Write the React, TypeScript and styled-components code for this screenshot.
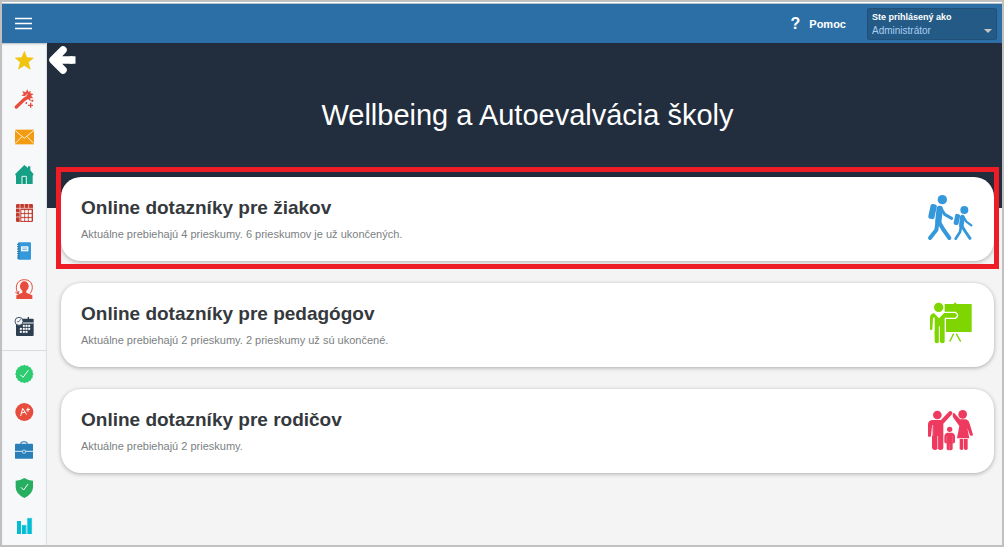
import React from 'react';
import styled, { createGlobalStyle } from 'styled-components';

const GlobalStyle = createGlobalStyle`
  *, *::before, *::after { box-sizing: border-box; }
  body {
    margin: 0;
    background: #f4f4f4;
    font-family: "Liberation Sans", Arial, sans-serif;
  }
`;

const Frame = styled.div`
  display: flex;
  flex-direction: column;
  min-height: 100vh;
  border: 2px solid #c0c0c0;
`;

const TopBar = styled.header`
  display: flex;
  align-items: center;
  justify-content: space-between;
  height: 41px;
  padding: 2px 5px 0 9px;
  background: #2c6fa6;
  border-top: 1px solid #ffffff;
  box-shadow: inset 0 1px 0 #b9c3cb;
`;

const IconButton = styled.button`
  display: flex;
  align-items: center;
  justify-content: center;
  width: 24px;
  height: 30px;
  padding: 0;
  border: 0;
  background: none;
  cursor: pointer;
`;

const TopActions = styled.div`
  display: flex;
  align-items: center;
  gap: 21px;
`;

const HelpLink = styled.a`
  display: flex;
  align-items: center;
  gap: 9px;
  color: #ffffff;
  font-size: 11px;
  font-weight: bold;
  line-height: 16px;
  text-decoration: none;
`;

const HelpMark = styled.span`
  font-size: 16px;
  line-height: 16px;
`;

const RoleBox = styled.div`
  position: relative;
  width: 130px;
  height: 32px;
  padding: 2px 0 0 4px;
  border: 1px solid #215179;
  border-radius: 2px;
  background: #245a86;
`;

const RoleLabel = styled.label`
  display: block;
  color: #ffffff;
  font-size: 9px;
  font-weight: bold;
  line-height: 12px;
  white-space: nowrap;
`;

const RoleSelect = styled.select`
  display: block;
  width: 100%;
  height: 16px;
  padding: 0;
  border: 0;
  appearance: none;
  background: none;
  color: #a9cdf2;
  font-family: inherit;
  font-size: 10px;
  line-height: 16px;
`;

const Caret = styled.span`
  position: absolute;
  right: 4px;
  bottom: 6px;
  border: 4px solid transparent;
  border-top-color: #c5c5c5;
  border-bottom: 0;
  pointer-events: none;
`;

const Body = styled.div`
  display: flex;
  flex: 1;
`;

const Sidebar = styled.nav`
  flex: none;
  width: 45px;
  background: #f6f8fa;
  border-right: 1px solid #dfe2e5;
  box-shadow: inset 0 2px 2px -1px #b4bac0;
`;

const NavGroup = styled.ul`
  display: grid;
  gap: 2px;
  margin: 0;
  padding: 0;
  list-style: none;

  & + & {
    margin-top: 5px;
    padding-top: 5px;
    border-top: 1px solid #d9dcdf;
  }
`;

const NavLink = styled.a`
  display: flex;
  align-items: center;
  justify-content: center;
  height: 36px;
`;

const Main = styled.main`
  flex: 1;
  min-width: 0;
  background: #f4f4f4;
`;

const Hero = styled.div`
  height: 165px;
  padding-top: 2px;
  background: #222e3d;
`;

const BackButton = styled(IconButton)`
  width: 30px;
`;

const PageTitle = styled.h1`
  margin: 23px 8px 0 14px;
  color: #ffffff;
  font-size: 29px;
  font-weight: normal;
  line-height: 34px;
  text-align: center;
`;

const Cards = styled.div`
  display: flex;
  flex-direction: column;
  gap: 22px;
  margin-top: -31px;
  padding: 0 8px 20px 14px;
`;

const Card = styled.a<{ $highlighted?: boolean }>`
  position: relative;
  display: flex;
  align-items: center;
  justify-content: space-between;
  min-height: 84px;
  padding: 18px 20px;
  border-radius: 20px;
  background: #ffffff;
  box-shadow: 0 1px 4px rgba(0, 0, 0, 0.3);
  color: inherit;
  text-decoration: none;

  &::after {
    content: "";
    display: ${({ $highlighted }) => ($highlighted ? 'block' : 'none')};
    position: absolute;
    inset: -10px -5px -8px;
    border: 5px solid #ee1c25;
  }
`;

const CardTitle = styled.h2`
  margin: 0 0 6px;
  color: #35393d;
  font-size: 19px;
  font-weight: bold;
  line-height: 24px;
`;

const CardText = styled.p`
  margin: 0;
  color: #7b7f82;
  font-size: 11px;
  line-height: 16px;
`;

const Menu = () => (
  <svg width="18" height="14" viewBox="0 0 18 14" aria-hidden="true">
    <path d="M1 1.500h17M1 6.500h17M1 11.500h17" stroke="#fff" strokeWidth="1.500" />
  </svg>
);

const BackArrow = () => (
  <svg width="28" height="30" viewBox="0 0 28 30" aria-hidden="true">
    <path d="M15 5 5 15l10 10M6 15h17" fill="none" stroke="#fff" strokeWidth="7.500" strokeLinecap="round" strokeLinejoin="round" />
    <path d="M22 11.250h5.500v7.500H22z" fill="#fff" />
  </svg>
);

const Glyph = ({ box, children }: { box: string; children: React.ReactNode }) => (
  <svg width="20" height="20" viewBox={box} aria-hidden="true">
    {children}
  </svg>
);

const badgeEdge = Array.from({ length: 32 }, (_, i) => {
  const angle = (i * Math.PI) / 16;
  const radius = i % 2 ? 25 : 27.5;
  return `${73 + radius * Math.cos(angle)},${87 + radius * Math.sin(angle)}`;
}).join(' ');

const mainNav = [
  {
    label: 'Obľúbené',
    icon: (
      <Glyph box="42 153 60 60">
        <path d="M73 152l8 20 21 1-16 14 6 22-19-12-19 12 6-22-16-14 21-1z" fill="#f1c40f" />
      </Glyph>
    ),
  },
  {
    label: 'Sprievodca',
    icon: (
      <Glyph box="42 267 60 60">
        <path d="M49 321l27-26" stroke="#e74c3c" strokeWidth="10" strokeLinecap="round" />
        <path d="M82 268l3 8 7-4-1 8 10 2-8 5 7 8-9-1 1 10-8-7-8 5-1-8 5-4-7-2-9-1 7-5-4-9 10 4z" fill="#e74c3c" />
        <path d="M73 291l10-9" stroke="#f6f8fa" strokeWidth="3" />
        <path d="M92 308v15M84 316h15M97 299v6M94 302h6M79 306v6" stroke="#e74c3c" strokeWidth="4" />
      </Glyph>
    ),
  },
  {
    label: 'Správy',
    icon: (
      <Glyph box="42 36 60 60">
        <path d="M45 44h57v44H45z" fill="#f39c12" />
        <path d="M45 46l28 24 29-24M45 86l21-21M102 86L81 65" fill="none" stroke="#fff2d9" strokeWidth="3" />
      </Glyph>
    ),
  },
  {
    label: 'Domov',
    icon: (
      <Glyph box="42 150 60 60">
        <path d="M73 150l11 9v-5h7v12l10 12-3 4v25H48v-25l-3-4z" fill="#16a085" />
        <path d="M66 207v-23h13v23" fill="none" stroke="#e7f5f1" strokeWidth="3" />
        <path d="M72 188v17" stroke="#0f8069" strokeWidth="2" />
      </Glyph>
    ),
  },
  {
    label: 'Rozvrh',
    icon: (
      <Glyph box="42 264 60 60">
        <rect x="48" y="267" width="51" height="54" rx="4" fill="#c0392b" />
        <path
          d="M48 280h51M60 267v54M65 286h7v7h-7zM76 286h7v7h-7zM87 286h7v7h-7zM65 298h7v7h-7zM76 298h7v7h-7zM87 298h7v7h-7zM65 310h7v7h-7zM76 310h7v7h-7zM87 310h7v7h-7z"
          fill="#fff"
          stroke="#f6f8fa"
          strokeWidth="2"
        />
        <path d="M73 267v12M86 267v12M48 293h11M48 306h11" stroke="#f6f8fa" strokeWidth="2" />
      </Glyph>
    ),
  },
  {
    label: 'Triedna kniha',
    icon: (
      <Glyph box="42 33 60 60">
        <rect x="54" y="37" width="39" height="52" rx="3" fill="#3498db" />
        <path d="M51 43h8M51 50h8M51 57h8M51 64h8M51 71h8M51 78h8M51 84h8" stroke="#23709f" strokeWidth="3" />
        <path d="M63 49h22v15H63z" fill="#fff" />
        <path d="M67 54h14M67 59h14" stroke="#3498db" strokeWidth="2" />
      </Glyph>
    ),
  },
  {
    label: 'Suplovanie',
    icon: (
      <Glyph box="42 147 60 60">
        <ellipse cx="73" cy="169" rx="13" ry="15" fill="#e74c3c" />
        <path d="M67 178h12v10l18 8v11H49v-11l18-8z" fill="#e74c3c" />
        <path d="M55 192c-11-15-8-43 18-43 27 0 29 29 17 42M46 187l9 5 2-9" fill="none" stroke="#e74c3c" strokeWidth="3" />
      </Glyph>
    ),
  },
  {
    label: 'Plán',
    icon: (
      <Glyph box="42 261 60 60">
        <rect x="48" y="266" width="53" height="52" rx="3" fill="#2c3e50" />
        <path d="M48 279h53" stroke="#f6f8fa" strokeWidth="3" />
        <path d="M85 261v10" stroke="#2c3e50" strokeWidth="4" />
        <path
          d="M69 285h5v5h-5zM77 285h5v5h-5zM85 285h5v5h-5zM60 294h5v5h-5zM69 294h5v5h-5zM77 294h5v5h-5zM85 294h5v5h-5zM60 303h5v5h-5zM69 303h5v5h-5zM77 303h5v5h-5z"
          fill="#fff"
          stroke="#fff"
          strokeWidth="1"
        />
        <circle cx="57" cy="274" r="12" fill="#f6f8fa" stroke="#44566a" strokeWidth="3" />
        <path d="M51 275h6l5-8" fill="none" stroke="#2c3e50" strokeWidth="2" />
      </Glyph>
    ),
  },
];

const toolNav = [
  {
    label: 'Dochádzka',
    icon: (
      <Glyph box="42 57 60 60">
        <polygon points={badgeEdge} fill="#2ecc71" />
        <path d="M61 89l8 8 16-21" fill="none" stroke="#fff" strokeWidth="3" />
      </Glyph>
    ),
  },
  {
    label: 'Známky',
    icon: (
      <Glyph box="42 171 60 60">
        <circle cx="73" cy="201" r="27" fill="#e74c3c" />
        <path d="M62 213l6-23 12 19M64 204l12-3M84 188v13M78 195l12-2" fill="none" stroke="#fff" strokeWidth="3" />
      </Glyph>
    ),
  },
  {
    label: 'Agenda',
    icon: (
      <Glyph box="42 285 60 60">
        <path d="M63 297v-5q9-4 18 0v5" fill="none" stroke="#2471a3" strokeWidth="3" />
        <rect x="45" y="296" width="54" height="45" rx="2" fill="#2980b9" />
        <path d="M45 319h54" stroke="#d6e9f5" strokeWidth="3" />
        <circle cx="72" cy="320" r="5" fill="#2980b9" stroke="#fff" strokeWidth="2" />
      </Glyph>
    ),
  },
  {
    label: 'Bezpečnosť',
    icon: (
      <Glyph box="42 84 60 60">
        <path d="M73 84q12 8 26 8v20q0 20-26 32-26-12-26-32V92q14 0 26-8z" fill="#27ae60" />
        <path d="M63 112l8 8 13-18" fill="none" stroke="#fff" strokeWidth="3" />
      </Glyph>
    ),
  },
  {
    label: 'Štatistiky',
    icon: (
      <Glyph box="42 198 60 60">
        <path d="M51 213h12v39H51zM66 225h13v27H66zM82 204h14v48H82z" fill="#00bcd4" />
        <path d="M67 226h11v25M83 205h12v46" fill="none" stroke="#62d6e4" strokeWidth="2" />
      </Glyph>
    ),
  },
];

const Students = () => (
  <svg width="48" height="48" viewBox="78 105 144 144" aria-hidden="true">
    <g fill="none" stroke="#3498db" strokeLinecap="round" strokeLinejoin="round">
      <circle cx="127" cy="119" r="14" fill="#3498db" stroke="none" />
      <rect x="88" y="132" width="19" height="45" rx="6" transform="rotate(12 97 155)" fill="#3498db" stroke="none" />
      <path d="M119 147l-4 37" strokeWidth="19" />
      <path d="M124 147l10 16 21 12" strokeWidth="9" />
      <path d="M112 188l-3 22-19 24" strokeWidth="12" />
      <path d="M117 186l12 21 19 27" strokeWidth="12" />
      <circle cx="193" cy="150" r="12" fill="#3498db" stroke="none" />
      <rect x="163" y="162" width="15" height="33" rx="5" transform="rotate(12 171 179)" fill="#3498db" stroke="none" />
      <path d="M187 171l-3 26" strokeWidth="14" />
      <path d="M191 172l8 13 15 11" strokeWidth="7" />
      <path d="M183 200l-3 16-13 20" strokeWidth="8" />
      <path d="M186 199l11 17 13 19" strokeWidth="9" />
    </g>
  </svg>
);

const Teacher = () => (
  <svg width="48" height="48" viewBox="78 63 144 144" aria-hidden="true">
    <g fill="#7fd500">
      <path d="M134 72h28v-4h7v4h46v84h-81z" />
      <path d="M161 161l-12 24M169 161l13 24" stroke="#7fd500" strokeWidth="4" />
      <path
        d="M102 97l15 15 15-15h34q7 4 7 9t-7 9h-30v71q-2 6-10 6-6 0-7-6-2 6-9 6-8 0-8-8l-1-69-2 34q-7 6-11 0v-36q0-13 14-16z"
        stroke="#fff"
        strokeWidth="4"
      />
      <circle cx="116" cy="82" r="14" />
      <path d="M109 98l8 16 8-16z" fill="#fff" />
      <path d="M118 139v47M102 112v40" stroke="#fff" strokeWidth="3" />
    </g>
  </svg>
);

const Family = () => (
  <svg width="48" height="48" viewBox="78 66 144 144" aria-hidden="true">
    <g fill="#ee3a5f">
      <circle cx="112" cy="90" r="13" />
      <path d="M96 105h27l25-26q7-3 9 4 0 4-3 7l-24 26v73q-2 7-9 6-6 0-8-5-3 6-9 5-8-1-8-7v-64l-3 29q-5 6-9 0v-35q1-12 12-13z" />
      <path d="M113 153v37M98 120v32" stroke="#fff" strokeWidth="2" />
      <circle cx="188" cy="88" r="13" />
      <path d="M162 83l18 20h18q9 3 11 13l10 33q-3 6-9 2l-8-22 6 31h-37l7-37-19-26q-3-12 3-14z" />
      <path d="M179 162h11v30q-5 6-11 0zM192 162h11v30q-5 6-11 0z" />
      <circle cx="149" cy="133" r="8" />
      <path d="M141 143h16q7 2 8 10v19q-3 4-7 3v17q-4 6-9 2-5 4-9-2v-17q-4 1-7-3v-19q1-8 8-10z" />
      <path d="M149 176v18M140 153v20M158 153v20" stroke="#f79bae" strokeWidth="1" />
    </g>
  </svg>
);

const surveys = [
  {
    title: 'Online dotazníky pre žiakov',
    text: 'Aktuálne prebiehajú 4 prieskumy. 6 prieskumov je už ukončených.',
    icon: <Students />,
    highlighted: true,
  },
  {
    title: 'Online dotazníky pre pedagógov',
    text: 'Aktuálne prebiehajú 2 prieskumy. 2 prieskumy už sú ukončené.',
    icon: <Teacher />,
  },
  {
    title: 'Online dotazníky pre rodičov',
    text: 'Aktuálne prebiehajú 2 prieskumy.',
    icon: <Family />,
  },
];

export default function App() {
  return (
    <>
      <GlobalStyle />
      <Frame>
        <TopBar>
          <IconButton type="button" aria-label="Menu">
            <Menu />
          </IconButton>
          <TopActions>
            <HelpLink href="#pomoc">
              <HelpMark aria-hidden="true">?</HelpMark>
              Pomoc
            </HelpLink>
            <RoleBox>
              <RoleLabel htmlFor="role">Ste prihlásený ako</RoleLabel>
              <RoleSelect id="role" defaultValue="admin">
                <option value="admin">Administrátor</option>
              </RoleSelect>
              <Caret />
            </RoleBox>
          </TopActions>
        </TopBar>
        <Body>
          <Sidebar>
            {[mainNav, toolNav].map((group, index) => (
              <NavGroup key={index}>
                {group.map(({ label, icon }) => (
                  <li key={label}>
                    <NavLink href="#" aria-label={label}>
                      {icon}
                    </NavLink>
                  </li>
                ))}
              </NavGroup>
            ))}
          </Sidebar>
          <Main>
            <Hero>
              <BackButton type="button" aria-label="Späť">
                <BackArrow />
              </BackButton>
              <PageTitle>Wellbeing a Autoevalvácia školy</PageTitle>
            </Hero>
            <Cards>
              {surveys.map(({ title, text, icon, highlighted }) => (
                <Card key={title} href="#" $highlighted={highlighted}>
                  <div>
                    <CardTitle>{title}</CardTitle>
                    <CardText>{text}</CardText>
                  </div>
                  {icon}
                </Card>
              ))}
            </Cards>
          </Main>
        </Body>
      </Frame>
    </>
  );
}
